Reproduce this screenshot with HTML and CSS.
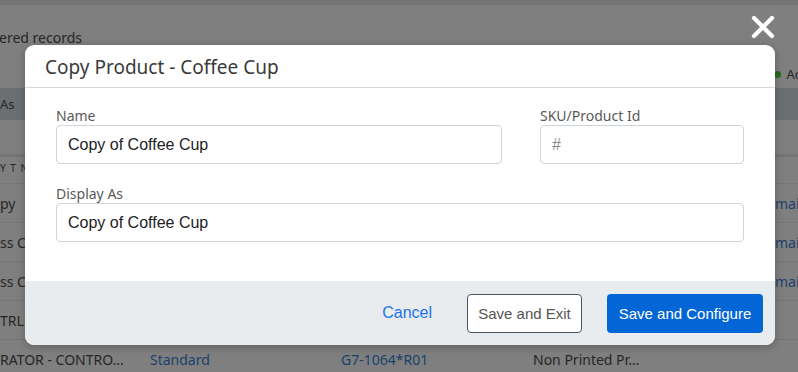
FILE: index.html
```html
<!DOCTYPE html>
<html lang="en">
<head>
    <meta charset="UTF-8">
    <meta name="viewport" content="width=device-width, initial-scale=1.0">
    <title>Copy Product</title>
    <link rel="stylesheet" href="styles.css">
</head>
<body>

    <!-- Page behind the dialog (dimmed) -->
    <div class="page">
        <div class="topbar"></div>
        <div class="records">ered records</div>
        <div class="status-row"><span class="dot"></span>Ac</div>
        <div class="thead">As</div>
        <div class="filter-row"></div>
        <div class="rule"></div>
        <div class="caps-row">Y T N</div>
        <div class="row"><span>py</span><span></span><span></span><span></span><span class="link">main</span></div>
        <div class="row"><span>ss C</span><span></span><span></span><span></span><span class="link">main</span></div>
        <div class="row"><span>ss C</span><span></span><span></span><span></span><span class="link">main</span></div>
        <div class="row"><span>TRL</span><span></span><span></span><span></span><span></span></div>
        <div class="row"><span>RATOR - CONTRO...</span><span class="link">Standard</span><span class="link">G7-1064*R01</span><span>Non Printed Pr...</span><span></span></div>
    </div>

    <!-- Close button over the backdrop -->
    <button class="close" aria-label="Close">
        <svg width="24" height="24" viewBox="0 0 24 24">
            <path d="M3 3 L21 21 M21 3 L3 21" stroke="#fff" stroke-width="4.2" stroke-linecap="round" fill="none"/>
        </svg>
    </button>

    <!-- Copy product dialog -->
    <div class="modal">
        <div class="modal-header">Copy Product - Coffee Cup</div>
        <div class="modal-body">
            <div class="field">
                <label>Name</label>
                <input type="text" value="Copy of Coffee Cup">
            </div>
            <div class="field">
                <label>SKU/Product Id</label>
                <input type="text" placeholder="#">
            </div>
            <div class="field wide">
                <label>Display As</label>
                <input type="text" value="Copy of Coffee Cup">
            </div>
        </div>
        <div class="modal-footer">
            <button class="btn-link">Cancel</button>
            <button class="btn-outline">Save and Exit</button>
            <button class="btn-primary">Save and Configure</button>
        </div>
    </div>

</body>
</html>
```

FILE: styles.css
```css
body {
    margin: 0;
    width: 798px;
    height: 372px;
    overflow: hidden;
    background: #7f7f7f;
    font-family: "Noto Sans", "Open Sans", sans-serif;
    color: #262626;
}

/* background page */
.topbar {
    height: 5px;
    background: #747474;
}
.records {
    height: 55px;
    box-sizing: border-box;
    padding-top: 10px;
    display: flex;
    align-items: center;
    font-size: 14px;
    margin-left: -1px;
}
.status-row {
    height: 28px;
    display: flex;
    align-items: center;
    justify-content: flex-end;
    font-size: 13px;
    margin-right: -3px;
    white-space: nowrap;
}
.dot {
    width: 7px;
    height: 7px;
    border-radius: 50%;
    background: #2a6a22;
    margin-right: 5px;
}
.thead {
    height: 32px;
    background: #6c6f71;
    font-size: 13px;
    line-height: 32px;
}
.filter-row {
    height: 34px;
}
.rule {
    height: 3px;
    background: #727475;
}
.caps-row {
    height: 26px;
    font-size: 10px;
    line-height: 22px;
    letter-spacing: 1px;
}
.row {
    height: 38px;
    border-top: 1px solid #777;
    display: grid;
    grid-template-columns: 150px 191px 192px 242px 60px;
    align-items: center;
    font-size: 14px;
    white-space: nowrap;
}
.row span {
    overflow: hidden;
}
.link {
    color: #1b3f6c;
}

/* close button */
.close {
    position: absolute;
    top: 15px;
    left: 751px;
    padding: 0;
    border: none;
    background: none;
    cursor: pointer;
}

/* dialog */
.modal {
    position: absolute;
    top: 45px;
    left: 25px;
    width: 750px;
    background: #fff;
    border-radius: 9px;
    overflow: hidden;
    box-shadow: 0 2px 8px rgba(0, 0, 0, 0.25);
}
.modal-header {
    height: 42px;
    border-bottom: 1px solid #d3dadd;
    padding-left: 20px;
    font-size: 19px;
    line-height: 44px;
    color: #3a3a3a;
}
.modal-body {
    display: grid;
    grid-template-columns: 446px 204px;
    column-gap: 38px;
    row-gap: 23px;
    padding: 21px 31px 39px;
}
.field.wide {
    grid-column: 1 / 3;
}
.field label {
    display: block;
    height: 16px;
    font-size: 14px;
    line-height: 14px;
    color: #5a5a5a;
}
.field input {
    display: block;
    width: 100%;
    height: 39px;
    box-sizing: border-box;
    border: 1px solid #ccd5db;
    border-radius: 4px;
    padding: 0 11px;
    font-family: "Liberation Sans", Arial, sans-serif;
    font-size: 16px;
    color: #222;
}
.field input::placeholder {
    color: #888;
}
.modal-footer {
    height: 64px;
    background: #e9ecef;
    display: flex;
    align-items: center;
    justify-content: flex-end;
    padding-right: 12px;
}
.modal-footer button {
    height: 39px;
    font-family: "Liberation Sans", Arial, sans-serif;
    font-size: 15px;
    border-radius: 4px;
    cursor: pointer;
}
.btn-link {
    background: none;
    border: none;
    color: #1a73e8;
    font-size: 16px !important;
    padding: 0 10px;
    margin-right: 25px;
}
.btn-outline {
    width: 115px;
    background: #fff;
    border: 1px solid #4b5660;
    color: #555;
    margin-right: 25px;
}
.btn-primary {
    width: 156px;
    background: #0366d6;
    border: none;
    color: #fff;
}
```
